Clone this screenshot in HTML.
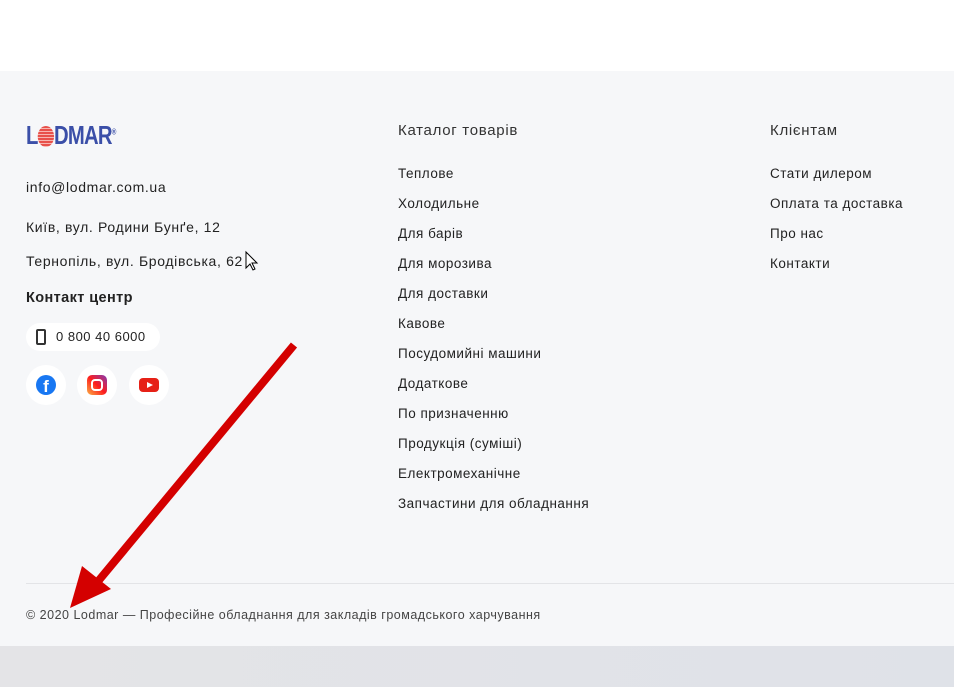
<!DOCTYPE html>
<html><head><meta charset="utf-8"><style>
*{margin:0;padding:0;box-sizing:border-box}
body{width:954px;height:687px;overflow:hidden;background:#fff;font-family:"Liberation Sans",sans-serif;color:#222;position:relative}
.foot{position:absolute;top:71px;left:0;width:954px;height:575px;background:#f6f7f9}
.bot{position:absolute;top:646px;left:0;width:954px;height:41px;background:linear-gradient(90deg,#e4e4e7,#dfe2e8)}
.t{position:absolute;white-space:nowrap}
.l{font-size:13.5px;color:#222;letter-spacing:.5px}
.h{font-size:15px;color:#333;letter-spacing:.7px}
.m{font-size:14px;letter-spacing:.65px}
.pill{position:absolute;left:26px;top:323px;width:134px;height:28px;background:#fff;border-radius:14px}
.c{position:absolute;top:365px;width:40px;height:40px;border-radius:50%;background:#fff}
hr{position:absolute;top:583px;left:26px;width:928px;border:0;border-top:1px solid #e3e4e7}
</style></head><body>
<div class="foot"></div><div class="bot"></div>
<div class="t" style="left:26px;top:120px;font-size:26px;font-weight:bold;color:#3b4fa8;letter-spacing:-1px;transform:scaleX(.78);transform-origin:left">L<span style="display:inline-block;width:21px;height:21px;border-radius:50%;background:repeating-linear-gradient(#e8504a 0 2px,#f7b5b0 2px 3px);vertical-align:-3px"></span>DMAR<sup style="font-size:8px">®</sup></div>
<div class="t m" style="left:26px;top:179px">info@lodmar.com.ua</div>
<div class="t m" style="left:26px;top:219px">Київ, вул. Родини Бунґе, 12</div>
<div class="t m" style="left:26px;top:253px">Тернопіль, вул. Бродівська, 62</div>
<div class="t" style="left:26px;top:290px;font-size:14.5px;font-weight:bold;letter-spacing:.4px">Контакт центр</div>
<div class="pill"></div>
<div class="t" style="left:36px;top:329px;width:10px;height:16px;border:2px solid #333;border-radius:2px"></div>
<div class="t" style="left:56px;top:329px;font-size:13px;letter-spacing:.5px">0 800 40 6000</div>
<div class="c" style="left:26px"><div style="position:absolute;left:10px;top:10px;width:20px;height:20px;border-radius:50%;background:#1877f2;color:#fff;font-weight:bold;font-size:17px;text-align:center;line-height:24px">f</div></div>
<div class="c" style="left:77px"><div style="position:absolute;left:10px;top:10px;width:20px;height:20px;border-radius:5px;background:linear-gradient(45deg,#fcb045,#fd1d1d,#833ab4)"><div style="position:absolute;left:4px;top:4px;width:12px;height:12px;border:2px solid #fff;border-radius:4px"></div></div></div>
<div class="c" style="left:129px"><div style="position:absolute;left:10px;top:13px;width:20px;height:14px;border-radius:4px;background:#e62117"><div style="position:absolute;left:8px;top:3.5px;border-left:6px solid #fff;border-top:3.5px solid transparent;border-bottom:3.5px solid transparent"></div></div></div>
<div class="t h" style="left:398px;top:122px">Каталог товарів</div>
<div class="t l" style="left:398px;top:166px">Теплове</div>
<div class="t l" style="left:398px;top:196px">Холодильне</div>
<div class="t l" style="left:398px;top:226px">Для барів</div>
<div class="t l" style="left:398px;top:256px">Для морозива</div>
<div class="t l" style="left:398px;top:286px">Для доставки</div>
<div class="t l" style="left:398px;top:316px">Кавове</div>
<div class="t l" style="left:398px;top:346px">Посудомийні машини</div>
<div class="t l" style="left:398px;top:376px">Додаткове</div>
<div class="t l" style="left:398px;top:406px">По призначенню</div>
<div class="t l" style="left:398px;top:436px">Продукція (суміші)</div>
<div class="t l" style="left:398px;top:466px">Електромеханічне</div>
<div class="t l" style="left:398px;top:496px">Запчастини для обладнання</div>
<div class="t h" style="left:770px;top:122px">Клієнтам</div>
<div class="t l" style="left:770px;top:166px">Стати дилером</div>
<div class="t l" style="left:770px;top:196px">Оплата та доставка</div>
<div class="t l" style="left:770px;top:226px">Про нас</div>
<div class="t l" style="left:770px;top:256px">Контакти</div>
<hr>
<div class="t" style="left:26px;top:608px;font-size:12.5px;color:#444;letter-spacing:.5px">© 2020 Lodmar — Професійне обладнання для закладів громадського харчування</div>
<svg style="position:absolute;left:0;top:0" width="954" height="687"><line x1="294" y1="345" x2="95" y2="585" stroke="#d40000" stroke-width="8"/><polygon points="70,608 82,566 111,589" fill="#d40000"/><path d="M246 252 l0 16 l4-4 l3 6 l2-1 l-3-6 l5 0z" fill="#fff" stroke="#000" stroke-width="1"/></svg>
</body></html>
